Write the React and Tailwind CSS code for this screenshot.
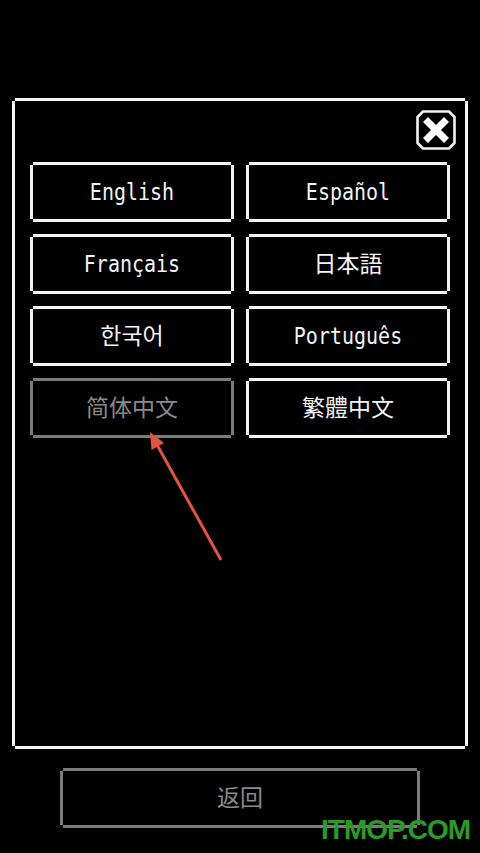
import React from "react";

// pixel-style outline: four offset shadows leave the corners open
const whiteEdge =
  "shadow-[0_-3px_0_#f4f4f4,0_3px_0_#f4f4f4,-3px_0_0_#f4f4f4,3px_0_0_#f4f4f4]";
const grayEdge =
  "shadow-[0_-3px_0_#7b7b7b,0_3px_0_#7b7b7b,-3px_0_0_#7b7b7b,3px_0_0_#7b7b7b]";

const languages = [
  { label: "English", latin: true },
  { label: "Español", latin: true },
  { label: "Français", latin: true },
  { label: "日本語", font: "font-['Noto_Sans_CJK_JP',sans-serif]" },
  { label: "한국어", font: "font-['Noto_Sans_CJK_KR',sans-serif]" },
  { label: "Português", latin: true },
  { label: "简体中文", font: "font-['Noto_Sans_CJK_SC',sans-serif]", current: true },
  { label: "繁體中文", font: "font-['Noto_Sans_CJK_TC',sans-serif]" },
];

const CloseIcon = () => (
  <svg width="42" height="42" viewBox="0 0 42 42">
    <path
      d="M8 2.5 H34 L39.5 8 V34 L34 39.5 H8 L2.5 34 V8 Z"
      fill="none"
      stroke="#f4f4f4"
      strokeWidth="2.6"
    />
    <path d="M10.5 10.5 L31.5 31.5 M31.5 10.5 L10.5 31.5" stroke="#fff" strokeWidth="7" />
  </svg>
);

const LangButton = ({ item }) => (
  <button
    className={`h-[54px] flex items-center justify-center bg-black ${
      item.current ? grayEdge + " text-[#8a8a8a]" : whiteEdge + " text-[#f4f4f4]"
    }`}
  >
    {item.latin ? (
      <span className="inline-block scale-y-[1.12] font-['DejaVu_Sans_Mono',monospace] text-[20px] leading-none">
        {item.label}
      </span>
    ) : (
      <span className={`${item.font} inline-block -translate-y-[2px] text-[23px] leading-none`}>
        {item.label}
      </span>
    )}
  </button>
);

export default function App() {
  return (
    <div className="relative w-[480px] h-[853px] bg-black overflow-hidden">
      <div className="pt-[101px] pl-[15px]">
        <div className={`w-[450px] h-[645px] flex flex-col ${whiteEdge}`}>
          <div className="flex justify-end pt-[8px] pr-[8px]">
            <CloseIcon />
          </div>
          <div className="grid grid-cols-2 gap-[18px] px-[18px] mt-[14px]">
            {languages.map((item) => (
              <LangButton key={item.label} item={item} />
            ))}
          </div>
        </div>
      </div>

      <div
        className={`mt-[25px] ml-[63px] w-[354px] h-[54px] flex items-center justify-center ${grayEdge}`}
      >
        <span className="inline-block -translate-y-[2px] font-['Noto_Sans_CJK_SC',sans-serif] text-[23px] text-[#8a8a8a] leading-none">
          返回
        </span>
      </div>

      {/* red pointer arrow */}
      <svg
        className="absolute inset-0 pointer-events-none"
        width="480"
        height="853"
        viewBox="0 0 480 853"
      >
        <line x1="221" y1="560" x2="156" y2="443" stroke="#e5533d" strokeWidth="3" />
        <polygon points="150,432 164,443 151.5,450" fill="#e5533d" />
      </svg>

      <div className="absolute left-[321px] top-[816px] font-['Liberation_Sans',sans-serif] font-bold text-[28px] tracking-[-1px] text-[#2a9a28] leading-none">
        ITMOP.COM
      </div>
    </div>
  );
}
